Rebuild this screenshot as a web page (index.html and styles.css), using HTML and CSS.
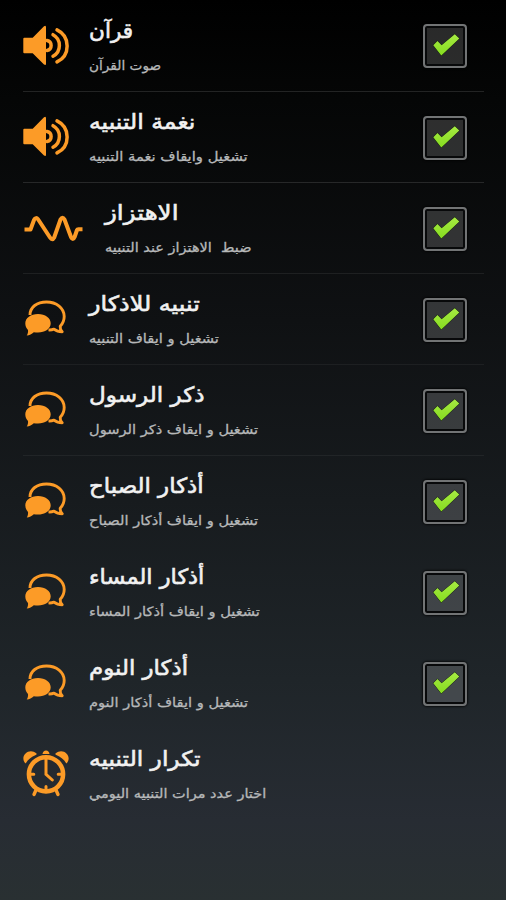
FILE: index.html
```
<!DOCTYPE html>
<html lang="ar">
<head>
<meta charset="utf-8">
<title>الإعدادات</title>
<link rel="stylesheet" href="styles.css">
</head>
<body>
<svg class="defs" width="0" height="0" aria-hidden="true">
  <defs>
    <linearGradient id="lime" x1="0" y1="0" x2="0" y2="1"><stop offset="0" stop-color="#a6ea42"/><stop offset="1" stop-color="#86dc20"/></linearGradient>
    <symbol id="speaker" viewBox="0 0 48 48">
      <path fill="#fc9b27" d="M2.300 15.700h8.400L22 4.300q2-1.500 2 1v36.400q0 2-2 .8L10.700 31.300H2.300q-1 0-1-1V16.700q0-1 1-1z"/>
      <g fill="none" stroke="#fc9b27" stroke-width="3.500" stroke-linecap="round"><path d="M25 18.500a5.100 5.100 0 0 1 0 10"/><path d="M31 12.700c8.500 4.500 8.500 17 0 21.500"/><path d="M35 7.900c13.500 6.500 13.500 25.500 0 32"/></g>
    </symbol>
    <symbol id="wave" viewBox="0 0 62 48">
      <path fill="none" stroke="#fc9b27" stroke-width="4" stroke-linejoin="round" d="M2.500 25.500H8.500L12 16q1.800-3.500 4.200-.5L28 33.500q2.300 3.500 4.200 0L38.500 15.500q2-3.500 4 0L49 33q2 4 3.600 0L55 26q.3-.8 1.500-.8h4"/>
    </symbol>
    <symbol id="chat" viewBox="0 0 48 48">
      <path fill="none" stroke="#fc9b27" stroke-width="2.900" stroke-linejoin="round" d="M8 20C8 12 15 7 24.500 7c10 0 17.700 6 17.700 14.500 0 4.200-2 7.700-4 9.800-.2 2.500.6 4 2 5.400-3.600 0-6.200-1-8.200-2.600q-2.500 1-5.500.8"/>
      <path fill="#fc9b27" d="M16 19c7.200 0 12.700 4 12.700 9.300s-5.500 9.300-12.700 9.300c-1.500 0-2.900-.1-4.200-.4-2.100 1.700-4.200 3-7.100 3.400 1-1.500 1.600-3.700 1.300-5.700-1.700-1.700-2.700-3.900-2.700-6.600C3.300 23 8.800 19 16 19z"/>
    </symbol>
    <symbol id="clock" viewBox="0 0 48 48">
      <g fill="#fc9b27"><path d="M3 13C-2.500 6 7-3 14.500 3.500q.5.600-.3 1.200C9 7 6 9.500 4 13q-.5.600-1 0z"/><path d="M45 13C50.500 6 41-3 33.500 3.500q-.5.600.3 1.200C39 7 42 9.500 44 13q.5.600 1 0z"/><path d="M20.500 4q.5-3.500 3.500-3.500T27.500 4z"/></g>
      <g fill="none" stroke="#fc9b27" stroke-linecap="round"><circle cx="24" cy="24.300" r="17.100" stroke-width="4.500"/><path stroke-width="3.400" d="M14 40l-2 4.500M34 40l2 4.500"/><path stroke-width="3" d="M24 9v15.300l6.300 5.700M9 24.300h2.800M36.200 24.300H39M24 39v-2.500"/></g>
    </symbol>
    <symbol id="tick" viewBox="0 0 30 28">
      <path d="M1.300 13.200l4.200-4.300 4.100 4.400L22.800 2.200l4.500 4.300L9.300 23.600z" fill="url(#lime)" stroke="#111d0c" stroke-width="1" stroke-linejoin="round" paint-order="stroke"/>
    </symbol>
  </defs>
</svg>
<main class="settings">
  <section class="row"><svg class="icon"><use href="#speaker"/></svg><div class="copy"><h2 class="title"><span>قرآن</span></h2><p class="note"><span>صوت القرآن</span></p></div><div class="box"><svg class="tick"><use href="#tick"/></svg></div></section>
  <section class="row"><svg class="icon"><use href="#speaker"/></svg><div class="copy"><h2 class="title"><span>نغمة التنبيه</span></h2><p class="note"><span>تشغيل وايقاف نغمة التنبيه</span></p></div><div class="box"><svg class="tick"><use href="#tick"/></svg></div></section>
  <section class="row"><svg class="icon icon-wide"><use href="#wave"/></svg><div class="copy"><h2 class="title"><span>الاهتزاز</span></h2><p class="note"><span>ضبط &nbsp;الاهتزاز عند التنبيه</span></p></div><div class="box"><svg class="tick"><use href="#tick"/></svg></div></section>
  <section class="row"><svg class="icon"><use href="#chat"/></svg><div class="copy"><h2 class="title"><span>تنبيه للاذكار</span></h2><p class="note"><span>تشغيل و ايقاف التنبيه</span></p></div><div class="box"><svg class="tick"><use href="#tick"/></svg></div></section>
  <section class="row"><svg class="icon"><use href="#chat"/></svg><div class="copy"><h2 class="title"><span>ذكر الرسول</span></h2><p class="note"><span>تشغيل و ايقاف ذكر الرسول</span></p></div><div class="box"><svg class="tick"><use href="#tick"/></svg></div></section>
  <section class="row"><svg class="icon"><use href="#chat"/></svg><div class="copy"><h2 class="title"><span>أذكار الصباح</span></h2><p class="note"><span>تشغيل و ايقاف أذكار الصباح</span></p></div><div class="box"><svg class="tick"><use href="#tick"/></svg></div></section>
  <section class="row"><svg class="icon"><use href="#chat"/></svg><div class="copy"><h2 class="title"><span>أذكار المساء</span></h2><p class="note"><span>تشغيل و ايقاف أذكار المساء</span></p></div><div class="box"><svg class="tick"><use href="#tick"/></svg></div></section>
  <section class="row"><svg class="icon"><use href="#chat"/></svg><div class="copy"><h2 class="title"><span>أذكار النوم</span></h2><p class="note"><span>تشغيل و ايقاف أذكار النوم</span></p></div><div class="box"><svg class="tick"><use href="#tick"/></svg></div></section>
  <section class="row"><svg class="icon"><use href="#clock"/></svg><div class="copy"><h2 class="title"><span>تكرار التنبيه</span></h2><p class="note"><span>اختار عدد مرات التنبيه اليومي</span></p></div></section>
</main>
</body>
</html>
```
FILE: styles.css
```
* { box-sizing: border-box; }
html { background: #293032; }
body {
  margin: 0;
  height: 900px;
  overflow: hidden;
  background: linear-gradient(#000 0, #050606 100px, #0f1113 320px, #171b1e 500px, #1f2529 680px, #272c33 820px, #293032 900px);
  font-family: "DejaVu Sans", sans-serif;
  color: #f1f1f1;
}
.defs { position: absolute; }
.settings { padding: 1px 21px 0 22px; }
.row {
  --title-fit: 1.09;
  --note-fit: 1.125;
  display: flex;
  align-items: flex-start;
  height: 91px;
  padding: 21px 18px 0 0;
  background: linear-gradient(rgba(255,255,255,.12), rgba(255,255,255,.12)) 1px 100% / 461px 1px no-repeat;
}
.row:nth-child(1) { --title-fit: 1.03; --note-fit: 1.05; }
.row:nth-child(2) { --title-fit: 1.12; --note-fit: 1.135; }
.row:nth-child(3) { --title-fit: 1.17; --note-fit: 1.115; background-image: linear-gradient(rgba(255,255,255,.07), rgba(255,255,255,.07)); }
.row:nth-child(4) { --title-fit: 1.135; }
.row:nth-child(5) { --title-fit: 1.1; }
.row:nth-child(7) { --title-fit: 1.07; }
.row:nth-child(9) { --title-fit: 1.11; --note-fit: 1.115; }
.row:nth-child(4), .row:nth-child(5) { background-image: linear-gradient(rgba(255,255,255,.05), rgba(255,255,255,.05)); }
.row:nth-child(n+6) { background-image: none; }
.icon { flex: none; width: 48px; height: 48px; margin-right: 19px; }
.icon-wide { width: 62px; margin-right: 21px; }
.copy { flex: 1; min-width: 0; margin-top: -5px; white-space: nowrap; }
.title, .note { margin: 0; direction: rtl; display: flex; justify-content: flex-end; }
.title span, .note span { display: block; transform-origin: 0 50%; }
.title { font-size: 21px; line-height: 28px; font-weight: 400; -webkit-text-stroke: .6px #f1f1f1; }
.title span { transform: scaleX(var(--title-fit)); }
.note { font-size: 13px; line-height: 20px; margin-top: 11px; color: #b6b8b9; -webkit-text-stroke: .3px #b6b8b9; }
.note span { transform: scaleX(var(--note-fit)); }
.box {
  flex: none;
  width: 44px;
  height: 44px;
  margin-top: 2px;
  padding: 6px 0 0 7px;
  border: 2px solid #727475;
  border-radius: 4px;
  background: rgba(255,255,255,.16);
  box-shadow: inset 0 0 0 2px #08090a, 0 0 2px 1px rgba(0,0,0,.7);
}
.row:nth-child(n+2) .box { margin-top: 3px; }
.tick { display: block; width: 30px; height: 28px; }
```
